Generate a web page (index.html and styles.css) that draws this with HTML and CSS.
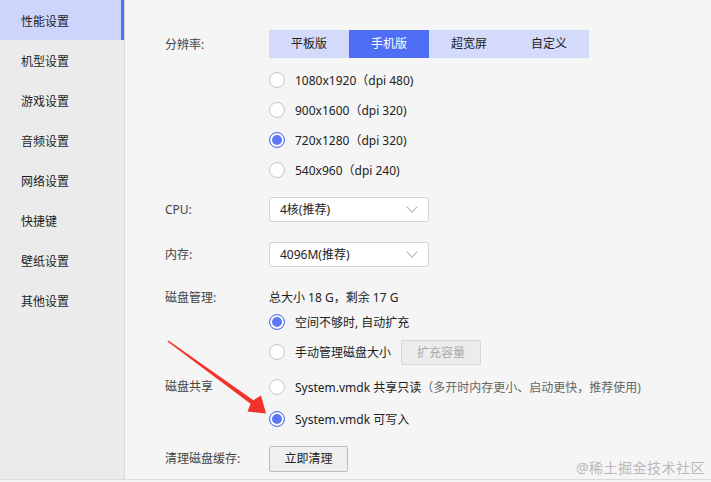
FILE: index.html
```html
<!DOCTYPE html>
<html lang="zh-CN">
<head>
    <meta charset="UTF-8">
    <title>设置</title>
    <link rel="stylesheet" href="styles.css">
</head>
<body>
    <div class="app">
        <!-- Sidebar -->
        <nav class="sidebar">
            <div class="nav-item active">性能设置</div>
            <div class="nav-item">机型设置</div>
            <div class="nav-item">游戏设置</div>
            <div class="nav-item">音频设置</div>
            <div class="nav-item">网络设置</div>
            <div class="nav-item">快捷键</div>
            <div class="nav-item">壁纸设置</div>
            <div class="nav-item">其他设置</div>
        </nav>

        <!-- Settings -->
        <main class="main">
            <div class="row">
                <div class="label label-tabs">分辨率:</div>
                <div class="field">
                    <div class="tabs">
                        <div class="tab">平板版</div>
                        <div class="tab active">手机版</div>
                        <div class="tab">超宽屏</div>
                        <div class="tab">自定义</div>
                    </div>
                    <div class="options res-options">
                        <div class="option"><span class="radio"></span>1080x1920（dpi 480)</div>
                        <div class="option"><span class="radio"></span>900x1600（dpi 320)</div>
                        <div class="option"><span class="radio checked"></span>720x1280（dpi 320)</div>
                        <div class="option"><span class="radio"></span>540x960（dpi 240)</div>
                    </div>
                </div>
            </div>

            <div class="row row-cpu">
                <div class="label label-select">CPU:</div>
                <div class="select">4核(推荐)<span class="chevron"></span></div>
            </div>

            <div class="row row-mem">
                <div class="label label-select">内存:</div>
                <div class="select">4096M(推荐)<span class="chevron"></span></div>
            </div>

            <div class="row row-disk">
                <div class="label label-text">磁盘管理:</div>
                <div class="field">
                    <div class="disk-size">总大小 18 G，剩余 17 G</div>
                    <div class="option"><span class="radio checked"></span>空间不够时, 自动扩充</div>
                    <div class="option"><span class="radio"></span>手动管理磁盘大小<span class="btn btn-disabled">扩充容量</span></div>
                </div>
            </div>

            <div class="row row-share">
                <div class="label label-share">磁盘共享</div>
                <div class="field">
                    <div class="option share-option"><span class="radio"></span>System.vmdk 共享只读<span class="hint">（多开时内存更小、启动更快，推荐使用)</span></div>
                    <div class="option share-option"><span class="radio checked"></span>System.vmdk 可写入</div>
                </div>
            </div>

            <div class="row row-clean">
                <div class="label label-btn">清理磁盘缓存:</div>
                <div class="btn btn-clean">立即清理</div>
            </div>
        </main>
    </div>

    <!-- annotation arrow -->
    <svg class="arrow" width="711" height="482" viewBox="0 0 711 482">
        <polygon points="167.4,341.6 168.4,340.4 253.4,400.2 261,395.5 266,413.5 247.5,411.5 250.6,403.8" fill="#f2322b"/>
    </svg>

    <div class="watermark">@稀土掘金技术社区</div>
</body>
</html>
```

FILE: styles.css
```css
body {
    margin: 0;
    padding: 0;
    width: 711px;
    height: 482px;
    overflow: hidden;
    background: #f5f5f5;
    font-family: "Noto Sans", "Noto Sans CJK SC", sans-serif;
    font-size: 12px;
    color: #222;
    position: relative;
}

.app {
    display: flex;
    height: 479px;
    border-bottom: 1px solid #dcdcdc;
}

.sidebar {
    width: 124px;
    flex-shrink: 0;
    background: #ebebeb;
    border-right: 1px solid #d9d9d9;
}

.nav-item {
    height: 37px;
    line-height: 37px;
    padding: 3px 0 0 21px;
    color: #1e1e1e;
}

.nav-item.active {
    background: #cdd5fd;
    box-shadow: inset -3px 0 0 #5470f0;
}

.main {
    flex: 1;
    padding: 30px 0 0 40px;
    color: #333;
}

.row {
    display: flex;
    align-items: flex-start;
}

.label {
    width: 104px;
    flex-shrink: 0;
    color: #444;
}

.label-tabs { line-height: 29px; }
.label-select { line-height: 25px; }
.label-text { line-height: 21px; }
.label-share { line-height: 32px; }
.label-btn { line-height: 26px; }

.tabs {
    display: flex;
}

.tab {
    width: 80px;
    height: 28px;
    line-height: 28px;
    text-align: center;
    background: #d3dafa;
    color: #222;
}

.tab.active {
    background: #4e6ef6;
    color: #fff;
}

.res-options {
    margin-top: 7px;
}

.option {
    display: flex;
    align-items: center;
    height: 30px;
    color: #222;
}

.share-option {
    height: 32px;
}

.radio {
    width: 14px;
    height: 14px;
    border: 1px solid #c6c6c6;
    border-radius: 50%;
    background: #fff;
    margin-right: 10px;
    flex-shrink: 0;
    box-sizing: content-box;
}

.radio.checked {
    border-color: #5a76f2;
    background: #5b78f5;
    box-shadow: inset 0 0 0 2px #fff;
}

.hint {
    color: #666;
}

.row-cpu { margin-top: 12px; }
.row-mem { margin-top: 20px; }
.row-disk { margin-top: 20px; }
.row-share { margin-top: 4px; }
.row-clean { margin-top: 11px; }

.select {
    width: 148px;
    height: 23px;
    line-height: 23px;
    padding-left: 10px;
    border: 1px solid #d2d2d2;
    border-radius: 3px;
    background: #fff;
    color: #222;
    position: relative;
}

.chevron {
    position: absolute;
    right: 12px;
    top: 5px;
    width: 7px;
    height: 7px;
    border-right: 1px solid #b5b5b5;
    border-bottom: 1px solid #b5b5b5;
    transform: rotate(45deg);
}

.disk-size {
    height: 20px;
    line-height: 21px;
    color: #222;
}

.btn {
    box-sizing: border-box;
    text-align: center;
    border-radius: 2px;
}

.btn-disabled {
    width: 80px;
    height: 25px;
    line-height: 23px;
    margin-left: 10px;
    background: #ececec;
    border: 1px solid #d6d6d6;
    color: #a9a9a9;
}

.btn-clean {
    width: 79px;
    height: 26px;
    line-height: 24px;
    background: #efefef;
    border: 1px solid #bcbcbc;
    color: #222;
}

.arrow {
    position: absolute;
    left: 0;
    top: 0;
    pointer-events: none;
}

.watermark {
    position: absolute;
    right: 6px;
    top: 457px;
    font-size: 14px;
    color: #b9b9b9;
    letter-spacing: 0.5px;
}
```
